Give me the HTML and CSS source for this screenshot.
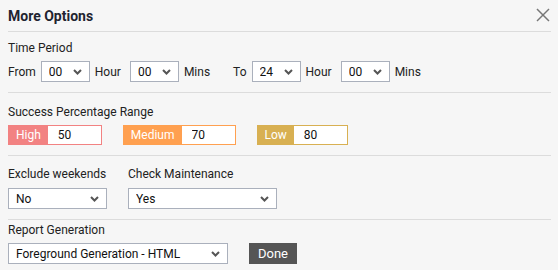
FILE: index.html
```html
<!DOCTYPE html>
<html lang="en">
<head>
  <meta charset="UTF-8" />
  <title>More Options</title>
  <link rel="stylesheet" href="styles.css">
</head>
<body>
  <div class="panel">
    <div class="panel-header">
      <h2>More Options</h2>
      <button class="close-btn" title="Close">
        <svg width="14" height="14" viewBox="0 0 14 14">
          <line x1="1" y1="1" x2="13" y2="13" stroke="#777" stroke-width="1.5"/>
          <line x1="13" y1="1" x2="1" y2="13" stroke="#777" stroke-width="1.5"/>
        </svg>
      </button>
    </div>

    <div class="section section-time">
      <div class="field-label">Time Period</div>
      <div class="time-row">
        <span>From</span>
        <span class="select-wrap sel-small">
          <select><option>00</option></select>
          <svg class="chevron" width="9" height="6" viewBox="0 0 9 6"><polyline points="1,1 4.5,4.5 8,1" fill="none" stroke="#555" stroke-width="2"/></svg>
        </span>
        <span>Hour</span>
        <span class="select-wrap sel-small after-hour">
          <select><option>00</option></select>
          <svg class="chevron" width="9" height="6" viewBox="0 0 9 6"><polyline points="1,1 4.5,4.5 8,1" fill="none" stroke="#555" stroke-width="2"/></svg>
        </span>
        <span>Mins</span>
        <span class="to-label">To</span>
        <span class="select-wrap sel-small">
          <select><option>24</option></select>
          <svg class="chevron" width="9" height="6" viewBox="0 0 9 6"><polyline points="1,1 4.5,4.5 8,1" fill="none" stroke="#555" stroke-width="2"/></svg>
        </span>
        <span>Hour</span>
        <span class="select-wrap sel-small after-hour">
          <select><option>00</option></select>
          <svg class="chevron" width="9" height="6" viewBox="0 0 9 6"><polyline points="1,1 4.5,4.5 8,1" fill="none" stroke="#555" stroke-width="2"/></svg>
        </span>
        <span>Mins</span>
      </div>
    </div>

    <div class="section section-range">
      <div class="field-label">Success Percentage Range</div>
      <div class="range-row">
        <div class="range-box high">
          <span class="range-tag">High</span>
          <input type="text" value="50">
        </div>
        <div class="range-box medium">
          <span class="range-tag">Medium</span>
          <input type="text" value="70">
        </div>
        <div class="range-box low">
          <span class="range-tag">Low</span>
          <input type="text" value="80">
        </div>
      </div>
    </div>

    <div class="section section-flags">
      <div class="flag-row">
        <div class="flag-col col-weekends">
          <div class="field-label">Exclude weekends</div>
          <span class="select-wrap">
            <select><option>No</option><option>Yes</option></select>
            <svg class="chevron" width="9" height="6" viewBox="0 0 9 6"><polyline points="1,1 4.5,4.5 8,1" fill="none" stroke="#555" stroke-width="2"/></svg>
          </span>
        </div>
        <div class="flag-col col-maint">
          <div class="field-label">Check Maintenance</div>
          <span class="select-wrap">
            <select><option>Yes</option><option>No</option></select>
            <svg class="chevron" width="9" height="6" viewBox="0 0 9 6"><polyline points="1,1 4.5,4.5 8,1" fill="none" stroke="#555" stroke-width="2"/></svg>
          </span>
        </div>
      </div>
    </div>

    <div class="section section-report">
      <div class="field-label">Report Generation</div>
      <div class="report-row">
        <span class="select-wrap sel-report">
          <select><option>Foreground Generation - HTML</option></select>
          <svg class="chevron" width="9" height="6" viewBox="0 0 9 6"><polyline points="1,1 4.5,4.5 8,1" fill="none" stroke="#555" stroke-width="2"/></svg>
        </span>
        <button class="done-btn">Done</button>
      </div>
    </div>
  </div>
</body>
</html>
```

FILE: styles.css
```css
body {
  font-family: Roboto, "Liberation Sans", Arial, sans-serif;
  background-color: #f6f6f6;
  color: #222;
  margin: 0;
  font-size: 12px;
}

.panel {
  padding: 0 7px 0 8px;
}

.panel-header {
  display: flex;
  justify-content: space-between;
  align-items: center;
  height: 31px;
  border-bottom: 1px solid #dcdcdc;
}

.panel-header h2 {
  margin: 0;
  font-size: 14px;
  font-weight: bold;
  color: #1f2430;
}

.close-btn {
  background: none;
  border: none;
  padding: 0;
  margin-right: 1px;
  margin-top: -2px;
  cursor: pointer;
  display: flex;
}

.section {
  border-bottom: 1px solid #dcdcdc;
}

.section-time {
  padding: 8px 0 10px;
}

.section-range {
  padding: 11px 0 10px;
}

.section-flags {
  padding: 10px 0 10px;
}

.section-report {
  padding: 2px 0 6px;
  border-bottom: none;
}

.field-label {
  height: 16px;
  line-height: 16px;
  margin-bottom: 5px;
  white-space: nowrap;
}

.section-flags .field-label {
  margin-bottom: 6px;
}

/* selects */
.select-wrap {
  position: relative;
  display: inline-block;
}

.select-wrap select {
  appearance: none;
  -webkit-appearance: none;
  width: 100%;
  height: 21px;
  border: 1px solid #aab0bc;
  border-radius: 0;
  background: #fff;
  font-family: inherit;
  font-size: 12px;
  color: #111;
  padding: 0 20px 0 7px;
  margin: 0;
  display: block;
}

.select-wrap .chevron {
  position: absolute;
  right: 8px;
  top: 8px;
  pointer-events: none;
}

.time-row {
  display: flex;
  align-items: center;
  gap: 5px;
}

.sel-small {
  width: 49px;
}

.after-hour {
  margin-left: 4px;
}

.to-label {
  margin-left: 18px;
}

/* percentage range */
.range-row {
  display: flex;
  gap: 21px;
}

.range-box {
  display: flex;
  height: 20px;
  box-sizing: border-box;
  border: 1px solid;
}

.range-tag {
  color: #fff;
  padding: 0 7px;
  line-height: 18px;
  font-size: 12px;
}

.range-box input {
  width: 53px;
  box-sizing: border-box;
  border: none;
  height: 18px;
  padding: 0 0 0 10px;
  font-family: inherit;
  font-size: 12px;
  color: #111;
  background: #fff;
  outline: none;
}

.high { border-color: #f28282; }
.high .range-tag { background-color: #f28282; }

.medium { border-color: #ffa050; }
.medium .range-tag { background-color: #ffa050; }

.low { border-color: #d8b052; }
.low .range-tag { background-color: #d8b052; }

/* flags */
.flag-row {
  display: flex;
  gap: 21px;
}

.col-weekends {
  width: 99px;
}

.col-maint {
  width: 149px;
}

.flag-col .select-wrap {
  display: block;
}

/* report */
.report-row {
  display: flex;
  align-items: center;
  gap: 21px;
}

.sel-report {
  width: 220px;
}

.done-btn {
  background-color: #555;
  color: #fff;
  border: none;
  height: 21px;
  padding: 0 9px;
  font-family: inherit;
  font-size: 13px;
  cursor: pointer;
  margin-top: -1px;
}
```
